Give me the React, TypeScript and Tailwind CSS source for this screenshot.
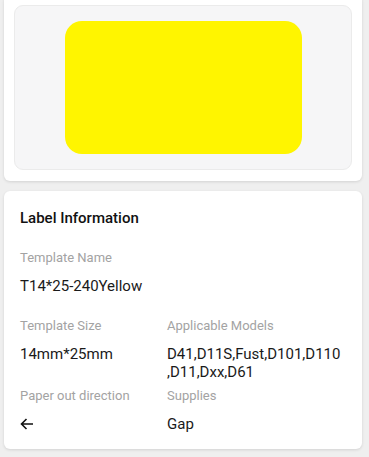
const font = { fontFamily: "Roboto, 'Noto Sans', sans-serif" };

const Field = ({ label, value }: { label: string; value: React.ReactNode }) => (
  <div className="flex flex-col">
    <span className="text-[13px] leading-[20px] text-[#a3a3a3]">{label}</span>
    <span className="mt-[9px] text-[15px] leading-[18px] text-[#1a1a1a]">{value}</span>
  </div>
);

const ArrowLeft = () => (
  <svg width="14" height="12" viewBox="0 0 14 12" className="mt-[3px]">
    <path d="M13 6H1.5M6.5 1L1.5 6L6.5 11" stroke="#111" strokeWidth="1.6" fill="none" />
  </svg>
);

export default function App() {
  return (
    <div className="h-[457px] w-[369px] overflow-hidden bg-[#efefef]" style={font}>
      {/* preview */}
      <div className="-mt-[5px] ml-[4px] w-[358px] rounded-[6px] bg-white p-[10px] pb-[11px] shadow-[0_1px_3px_rgba(0,0,0,0.12)]">
        <div className="flex h-[165px] items-center justify-center rounded-[9px] border border-[#ebebeb] bg-[#f6f6f7]">
          <div className="h-[133px] w-[237px] rounded-[17px] bg-[#fff500]" />
        </div>
      </div>

      {/* info */}
      <div className="ml-[4px] mt-[10px] w-[358px] rounded-[6px] bg-white px-[16px] pb-[16px] pt-[17px] shadow-[0_1px_3px_rgba(0,0,0,0.12)]">
        <h2 className="text-[15px] font-medium leading-[20px] text-[#111]">Label Information</h2>
        <div className="mt-[20px]">
          <Field label="Template Name" value="T14*25-240Yellow" />
        </div>
        <div className="mt-[21px] grid grid-cols-[147px_1fr] gap-y-[5px]">
          <Field label="Template Size" value="14mm*25mm" />
          <Field label="Applicable Models" value={<>D41,D11S,Fust,D101,D110<br />,D11,Dxx,D61</>} />
          <Field label="Paper out direction" value={<ArrowLeft />} />
          <Field label="Supplies" value="Gap" />
        </div>
      </div>
    </div>
  );
}
